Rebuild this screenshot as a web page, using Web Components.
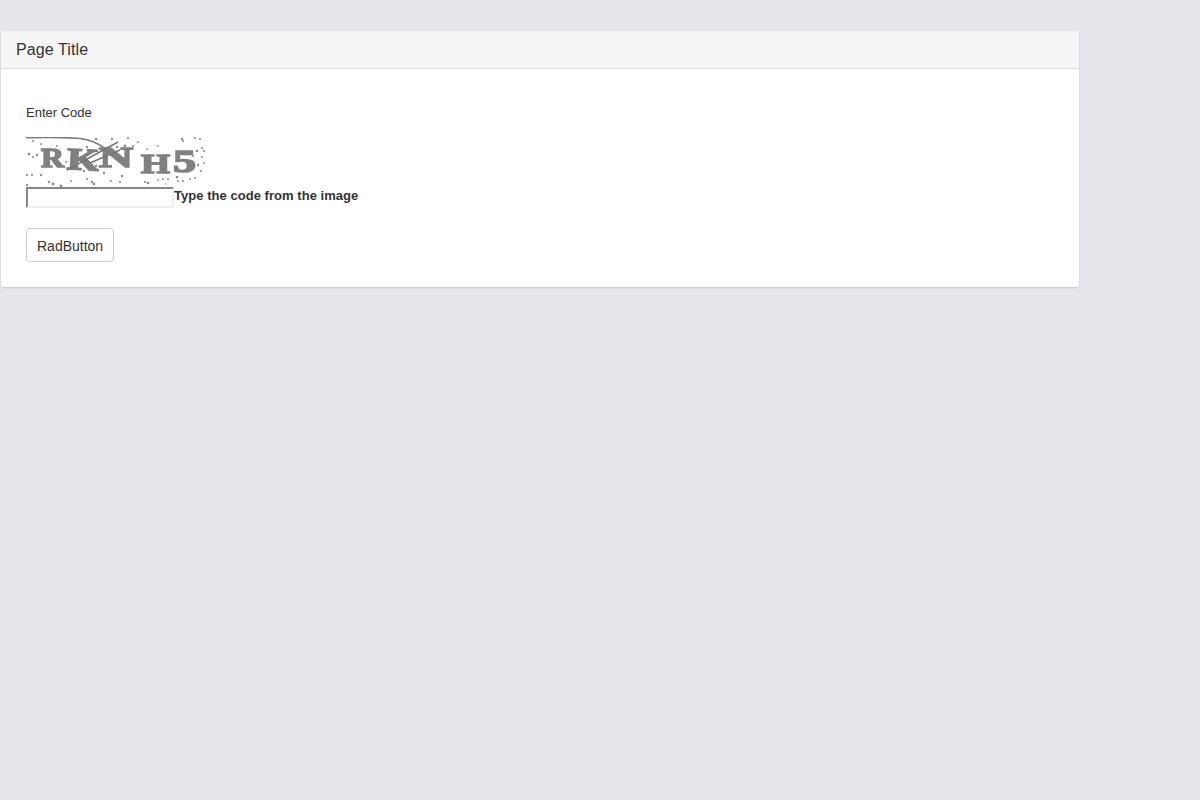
<!DOCTYPE html>
<html>
<head>
<meta charset="utf-8">
<title>Page Title</title>
<style>
    html,body{ margin:0; height:100%; background:#e6e7ec; }
    body{ padding:31px 121px 0 1px; box-sizing:border-box; font-family:"Liberation Sans",Arial,sans-serif; color:#333; }
</style>
</head>
<body>
<app-panel>
    <span slot="title">Page Title</span>
    <captcha-form label="Enter Code" hint="Type the code from the image"></captcha-form>
    <rad-button>RadButton</rad-button>
</app-panel>

<script>
class AppPanel extends HTMLElement {
    constructor(){
        super();
        this.attachShadow({mode:'open'}).innerHTML = `
            <style>
                :host{
                    display:block;
                    background:#fff;
                    border-radius:3px;
                    box-shadow:0 1px 2px rgba(0,0,0,0.14);
                }
                header{
                    height:37px;
                    padding:0 15px;
                    display:flex;
                    align-items:center;
                    background:#f5f5f5;
                    border-bottom:1px solid #ddd;
                    border-radius:3px 3px 0 0;
                    font-size:16px;
                    letter-spacing:.1px;
                    color:#333;
                }
                .body{
                    padding:36px 25px 25px;
                }
            </style>
            <header><slot name="title"></slot></header>
            <div class="body"><slot></slot></div>
        `;
    }
}

class CaptchaImage extends HTMLElement {
    constructor(){
        super();
        // noise specks, x y r
        const specks = [[3,17,1.3],[7,4,1.1],[15,7,1],[31,9,.9],[70,2,1.3],[86,2,1.2],[61,10,1.2],[65,13,1.3],[16,14,1],[11,18,1.2],[7,20,1.1],[1,38,1.1],[6,38,1.1],[15,38,1.2],[23,45,1.2],[27,47,1.4],[35,49,1.4],[1,48,1.2],[50,30,1],[58,34,1.2],[61,42,1.1],[66,45,1.3],[68,47,1.3],[78,36,1.2],[85,44,1],[40,25,1],[55,20,1.1],[65,30,1.2],[70,29,1.2],[102,1,1],[156,2,1.3],[169,1,1],[174,2,1],[99,9,1.4],[91,10,1.2],[132,9,.9],[121,12,.9],[157,4,1.1],[171,14,1.3],[176,11,1.1],[178,14,1.1],[167,19,1.1],[176,20,1],[172,28,1.2],[175,34,1.1],[178,26,.9],[96,39,1.2],[122,46,1.3],[119,45,1.1],[132,43,.9],[137,42,.9],[142,42,1],[151,40,1.3],[152,44,1],[157,44,1.1],[164,42,.9],[169,41,1],[94,45,1],[107,9,1.1],[112,5,1],[45,44,.9],[140,47,.8]];
        const dots = specks.map(s=>`<circle cx="${s[0]}" cy="${s[1]}" r="${s[2]}"/>`).join('');
        this.attachShadow({mode:'open'}).innerHTML = `
            <style>
                :host{ display:block; width:180px; height:50px; }
                svg{ display:block; filter:blur(.45px); }
                text{ font-family:"Liberation Serif",serif; font-weight:bold; fill:#808080; stroke:#808080; stroke-width:1.5px; }
            </style>
            <svg width="180" height="50" viewBox="0 0 180 50">
                <rect width="180" height="50" fill="#fff"/>
                <g fill="#8c8c8c">${dots}</g>
                <path d="M0 .8C20 0 38 .5 51 1.2C66 2 78 9 88 19" fill="none" stroke="#7a7a7a" stroke-width="1.5"/>
                <text x="15" y="30" font-size="27" textLength="23" lengthAdjust="spacingAndGlyphs">R</text>
                <text x="41" y="33" font-size="31" textLength="32" lengthAdjust="spacingAndGlyphs" transform="rotate(3 58 24)">K</text>
                <text x="73" y="30" font-size="30" textLength="34" lengthAdjust="spacingAndGlyphs">N</text>
                <text x="115" y="36" font-size="28" textLength="29" lengthAdjust="spacingAndGlyphs">H</text>
                <text x="147" y="35" font-size="32" textLength="23" lengthAdjust="spacingAndGlyphs">5</text>
                <path d="M41 33L92 5M64 26L94 13" fill="none" stroke="#777" stroke-width="1.5"/>
            </svg>
        `;
    }
}

class CaptchaForm extends HTMLElement {
    constructor(){
        super();
        this.attachShadow({mode:'open'}).innerHTML = `
            <style>
                :host{ display:block; font-size:13px; color:#333; }
                label{ display:block; line-height:15px; margin-bottom:17px; }
                .row{ display:flex; align-items:center; height:21px; }
                input{
                    box-sizing:border-box;
                    width:148px;
                    height:21px;
                    margin:0;
                    padding:1px;
                    background:#fff;
                    border-style:solid;
                    border-width:2px;
                    border-color:#868686 #eee #eee #868686;
                    outline:none;
                }
                b{ line-height:16px; letter-spacing:.04px; position:relative; top:-2px; }
            </style>
            <label id="lbl"></label>
            <captcha-image></captcha-image>
            <div class="row"><input type="text"><b id="hint"></b></div>
        `;
    }
    connectedCallback(){
        this.shadowRoot.getElementById('lbl').textContent = this.getAttribute('label');
        this.shadowRoot.getElementById('hint').textContent = this.getAttribute('hint');
    }
}

class RadButton extends HTMLElement {
    constructor(){
        super();
        this.attachShadow({mode:'open'}).innerHTML = `
            <style>
                :host{ display:block; margin-top:20px; }
                button{
                    box-sizing:border-box;
                    height:34px;
                    padding:2px 10px 0;
                    background:#fff;
                    border:1px solid #ccc;
                    border-radius:4px;
                    font:14px "Liberation Sans",Arial,sans-serif;
                    color:#333;
                    cursor:pointer;
                }
            </style>
            <button><slot></slot></button>
        `;
    }
}

customElements.define('app-panel', AppPanel);
customElements.define('captcha-image', CaptchaImage);
customElements.define('captcha-form', CaptchaForm);
customElements.define('rad-button', RadButton);
</script>
</body>
</html>
